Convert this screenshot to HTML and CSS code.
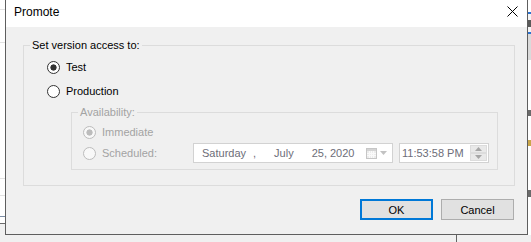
FILE: index.html
```html
<!DOCTYPE html>
<html>
<head>
<meta charset="utf-8">
<title>Promote</title>
<link rel="stylesheet" href="styles.css">
</head>
<body>
<div class="screen">
  <div class="top">
    <div class="bg-left"></div>
    <div class="dialog">
      <div class="titlebar">
        <span class="title">Promote</span>
        <svg class="close" width="11" height="11" viewBox="0 0 11 11"><path d="M0.5 0.5 L10.5 10.5 M10.5 0.5 L0.5 10.5" stroke="#000" stroke-width="1" fill="none"/></svg>
      </div>
      <div class="client">
        <fieldset class="group main">
          <legend>Set version access to:</legend>
          <div class="radio-row first"><span class="radio checked"></span><span class="lbl">Test</span></div>
          <div class="radio-row second"><span class="radio"></span><span class="lbl">Production</span></div>
          <fieldset class="group avail">
            <legend>Availability:</legend>
            <div class="radio-row imm"><span class="radio dis checked"></span><span class="lbl">Immediate</span></div>
            <div class="radio-row sched"><span class="radio dis"></span><span class="lbl sched-label">Scheduled:</span>
              <div class="datebox">
                <span class="d-day">Saturday</span><span class="d-comma">,</span><span class="d-month">July</span><span class="d-year">25, 2020</span>
                <svg class="cal" width="11" height="11" viewBox="0 0 11 11">
                  <rect x="0.5" y="0.5" width="10" height="10" fill="#ececec" stroke="#c6c6c6"/>
                  <rect x="1" y="1" width="9" height="2" fill="#d4d4d4"/>
                  <path d="M1 5.5H10M1 7.5H10M3.5 3V10M5.5 3V10M7.5 3V10" stroke="#fafafa" stroke-width="1"/>
                </svg>
                <svg class="drop" width="7" height="4" viewBox="0 0 7 4"><polygon points="0,0 7,0 3.5,4" fill="#c2c2c2"/></svg>
              </div>
              <div class="timebox">
                <span class="t-text">11:53:58 PM</span>
                <div class="spin">
                  <div class="spin-btn"><svg width="7" height="4" viewBox="0 0 7 4"><polygon points="0,4 7,4 3.5,0" fill="#a6a6a6"/></svg></div>
                  <div class="spin-btn"><svg width="7" height="4" viewBox="0 0 7 4"><polygon points="0,0 7,0 3.5,4" fill="#a6a6a6"/></svg></div>
                </div>
              </div>
            </div>
          </fieldset>
        </fieldset>
        <div class="buttons">
          <button class="btn default">OK</button>
          <button class="btn">Cancel</button>
        </div>
      </div>
    </div>
    <div class="bg-right"></div>
  </div>
  <div class="bg-bottom"><span class="col-line"></span></div>
</div>
</body>
</html>
```

FILE: styles.css
```css
html, body {
  margin: 0;
  padding: 0;
}
body {
  width: 531px;
  height: 242px;
  overflow: hidden;
  background: #f0f0f0;
  font-family: "Liberation Sans", Arial, sans-serif;
  font-size: 11px;
  color: #000;
}
.screen {
  display: flex;
  flex-direction: column;
  height: 242px;
}
.top {
  display: flex;
  height: 235px;
}
.bg-left {
  width: 5px;
  background: linear-gradient(to bottom,
    #ffffff 0, #ffffff 9px, #e2e2e2 9px, #e2e2e2 10px,
    #ffffff 10px, #ffffff 42px, #e2e2e2 42px, #e2e2e2 43px,
    #ffffff 43px, #ffffff 178px, #e2e2e2 178px, #e2e2e2 179px,
    #ffffff 179px, #ffffff 195px, #e2e2e2 195px, #e2e2e2 196px,
    #ffffff 196px, #ffffff 216px, #7d8ea6 216px, #7d8ea6 217px,
    #ffffff 217px, #ffffff 223px, #6a6a6a 223px, #6a6a6a 224px,
    #f0f0f0 224px);
}
.bg-right {
  width: 3px;
  background: linear-gradient(to bottom,
    #ffffff 0, #ffffff 12px, #2a72d0 12px, #2a72d0 14px,
    #f4f4f4 14px, #f4f4f4 20px, #5a5a5a 20px, #5a5a5a 27px,
    #f4f4f4 27px, #f4f4f4 32px, #2a72d0 32px, #2a72d0 34px,
    #dadada 34px, #dadada 60px, #ffffff 60px, #ffffff 110px,
    #6a6a6a 110px, #6a6a6a 116px, #ffffff 116px, #ffffff 140px,
    #c9a64a 140px, #c9a64a 146px, #ffffff 146px, #ffffff 190px,
    #6a6a6a 190px, #6a6a6a 197px, #ffffff 197px);
}
.dialog {
  width: 521px;
  border: 1px solid #5e5e5e;
  border-top: none;
  display: flex;
  flex-direction: column;
  background: #f0f0f0;
}
.titlebar {
  height: 27px;
  flex: none;
  background: #fff;
  display: flex;
  align-items: flex-start;
  justify-content: space-between;
  padding: 0 9px 0 8px;
}
.title {
  font-size: 12px;
  line-height: 14px;
  margin-top: 5px;
}
.close {
  display: block;
  margin-top: 6px;
}
.client {
  display: flex;
  flex-direction: column;
  padding-top: 11px;
}
.group {
  border: 1px solid #dcdcdc;
  margin: 0;
  padding: 0;
  min-width: 0;
  box-sizing: border-box;
}
.group legend {
  padding: 0 2px;
  margin-left: 6px;
  line-height: 14px;
  height: 14px;
}
.main {
  margin: 0 12px 0 17px;
  height: 148px;
  padding-top: 7px;
}
.radio-row {
  display: flex;
  align-items: center;
  height: 16px;
}
.first, .second {
  margin-left: 23px;
}
.second {
  margin-top: 8px;
}
.radio {
  width: 13px;
  height: 13px;
  box-sizing: border-box;
  border: 1px solid #333;
  border-radius: 50%;
  background: #fff;
  margin-right: 6px;
  flex: none;
}
.radio.checked {
  background: radial-gradient(circle at center, #333 0, #333 2.8px, #fff 3.4px);
}
.radio.dis {
  border-color: #bcbcbc;
  background: #f8f8f8;
}
.radio.dis.checked {
  background: radial-gradient(circle at center, #bcbcbc 0, #bcbcbc 2.8px, #f8f8f8 3.4px);
}
.avail {
  margin: 6px 0 0 47px;
  width: 427px;
  height: 65px;
  padding-top: 5px;
  color: #a3a3a3;
}
.avail .radio-row {
  margin-left: 11px;
}
.sched {
  margin-top: 3px;
  height: 20px;
}
.sched-label {
  width: 91px;
  flex: none;
}
.datebox {
  width: 200px;
  height: 20px;
  box-sizing: border-box;
  border: 1px solid #d2d2d2;
  background: #fff;
  display: flex;
  align-items: center;
  padding: 0 5px 0 8px;
  color: #6d6d78;
}
.d-comma {
  margin-left: 7px;
}
.d-month {
  margin-left: 18px;
}
.d-year {
  margin-left: 18px;
}
.cal {
  display: block;
  margin-left: auto;
}
.drop {
  display: block;
  margin-left: 3px;
}
.timebox {
  width: 90px;
  height: 20px;
  box-sizing: border-box;
  margin-left: 6px;
  border: 1px solid #d2d2d2;
  background: #fff;
  display: flex;
  align-items: center;
  padding: 0 1px 0 2px;
  color: #6d6d78;
}
.spin {
  margin-left: auto;
  display: flex;
  flex-direction: column;
  width: 17px;
  height: 16px;
}
.spin-btn {
  flex: 1;
  box-sizing: border-box;
  border: 1px solid #dcdcdc;
  background: #e9e9e9;
  display: flex;
  align-items: center;
  justify-content: center;
}
.spin-btn svg {
  display: block;
}
.buttons {
  display: flex;
  justify-content: flex-end;
  gap: 8px;
  margin-top: 13px;
  padding-right: 13px;
}
.btn {
  width: 73px;
  height: 21px;
  box-sizing: border-box;
  border: 1px solid #adadad;
  background: #e1e1e1;
  font-family: "Liberation Sans", Arial, sans-serif;
  font-size: 11px;
  color: #000;
  padding: 0;
  margin: 0;
  border-radius: 0;
}
.btn.default {
  border: 2px solid #0078d7;
}
.bg-bottom {
  height: 7px;
  display: flex;
}
.col-line {
  width: 1px;
  background: #646464;
  margin-left: 456px;
}
```
